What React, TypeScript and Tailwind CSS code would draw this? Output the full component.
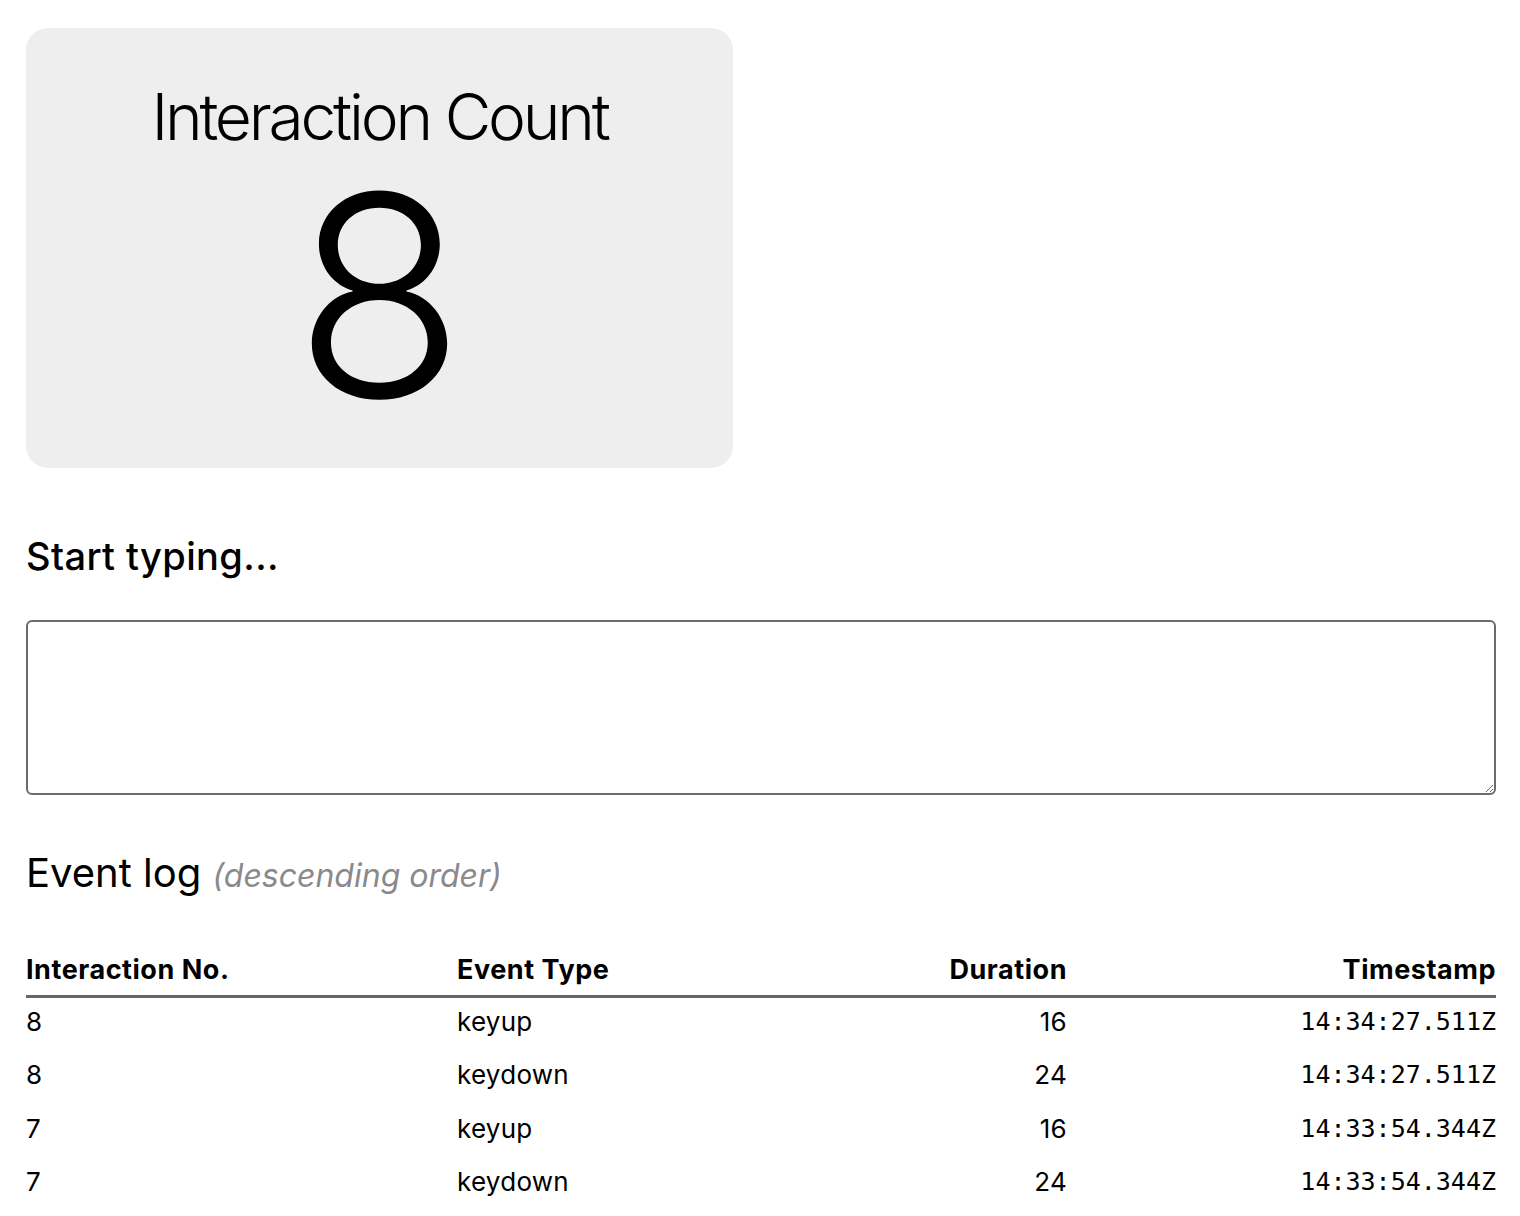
const events = [
  { no: 8, type: "keyup", duration: 16, time: "14:34:27.511Z" },
  { no: 8, type: "keydown", duration: 24, time: "14:34:27.511Z" },
  { no: 7, type: "keyup", duration: 16, time: "14:33:54.344Z" },
  { no: 7, type: "keydown", duration: 24, time: "14:33:54.344Z" },
];

function CountCard({ count }: { count: number }) {
  return (
    <div className="flex h-[440px] w-[707px] flex-col items-center rounded-[22px] bg-[#eeeeee] pt-[57px]">
      <h1 className="text-[64px] font-light leading-none tracking-[-0.05em]">
        Interaction Count
      </h1>
      <div className="mt-[7px] text-[280px] font-light leading-none">{count}</div>
    </div>
  );
}

export default function App() {
  return (
    <div className="min-h-screen bg-white pl-[26px] pr-[24px] pt-[28px] font-['Inter',sans-serif] text-black">
      <CountCard count={8} />

      <h2 className="mt-[69px] text-[38px] font-medium leading-none tracking-[0.01em]">
        Start typing...
      </h2>
      <textarea className="mt-[45px] block h-[175px] w-full resize-y rounded-[6px] border-2 border-[#6b6b6b] bg-white" />

      <h2 className="mt-[58px] text-[40px] font-normal leading-none">
        Event log{" "}
        <span className="text-[32px] font-normal italic text-[#8a8a8a]">
          (descending order)
        </span>
      </h2>

      <table className="mt-[60px] w-full table-fixed border-collapse">
        <colgroup>
          <col className="w-[431px]" />
          <col className="w-[305px]" />
          <col className="w-[305px]" />
          <col />
        </colgroup>
        <thead>
          <tr className="border-b-[3px] border-[#666666] text-[27px] font-bold leading-none tracking-[0.02em]">
            <th className="pb-[12px] pt-[3px] text-left">Interaction No.</th>
            <th className="pb-[12px] pt-[3px] text-left">Event Type</th>
            <th className="pb-[12px] pt-[3px] text-right">Duration</th>
            <th className="pb-[12px] pt-[3px] text-right">Timestamp</th>
          </tr>
        </thead>
        <tbody className="text-[26px] tracking-[0.01em]">
          {events.map((e, i) => (
            <tr key={i} className="leading-[25.4px]">
              <td className="pb-[17px] pt-[11px] text-left">{e.no}</td>
              <td className="pb-[17px] pt-[11px] text-left">{e.type}</td>
              <td className="pb-[17px] pt-[11px] text-right">{e.duration}</td>
              <td className="pb-[17px] pt-[11px] text-right font-['DejaVu_Sans_Mono',monospace] text-[25px] tracking-normal">
                {e.time}
              </td>
            </tr>
          ))}
        </tbody>
      </table>
    </div>
  );
}
